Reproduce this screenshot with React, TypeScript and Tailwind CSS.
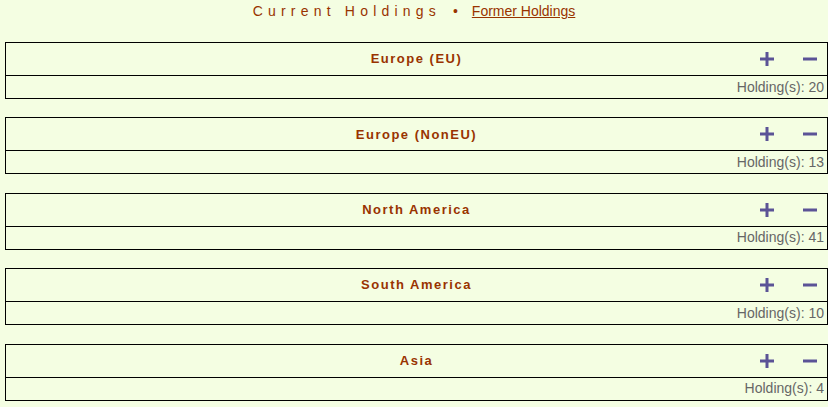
const regions = [
  { name: 'Europe (EU)', count: 20 },
  { name: 'Europe (NonEU)', count: 13 },
  { name: 'North America', count: 41 },
  { name: 'South America', count: 10 },
  { name: 'Asia', count: 4 },
];

const PlusIcon = () => (
  <svg width="14" height="14" viewBox="0 0 14 14" className="block">
    <rect x="0" y="5.5" width="14" height="3" fill="#5b5396" />
    <rect x="5.5" y="0" width="3" height="14" fill="#5b5396" />
  </svg>
);

const MinusIcon = () => (
  <svg width="14" height="14" viewBox="0 0 14 14" className="block">
    <rect x="0" y="5.5" width="14" height="3" fill="#5b5396" />
  </svg>
);

function RegionBox({ name, count }: { name: string; count: number }) {
  return (
    <div className="ml-[5px] border border-black mb-[18.4px]">
      <div className="relative h-[33px] flex items-center justify-center border-b border-black">
        <span className="text-[13px] font-bold tracking-[1.5px] text-[#993300]">{name}</span>
        <div className="absolute right-[10px] top-0 h-full flex items-center gap-[29px]">
          <button className="p-0 cursor-pointer"><PlusIcon /></button>
          <button className="p-0 cursor-pointer"><MinusIcon /></button>
        </div>
      </div>
      <div className="h-[22px] flex items-center justify-end pr-[3px] text-[14px] text-[#666666]">
        Holding(s): {count}
      </div>
    </div>
  );
}

export default function App() {
  return (
    <div
      className="w-[828px] h-[407px] bg-[#f4fee2] overflow-hidden"
      style={{ fontFamily: '"Liberation Sans", Arial, sans-serif' }}
    >
      <div className="h-[42px] flex items-start justify-center pt-[1px] text-[14px] text-[#993300]">
        <span className="tracking-[5.2px]">Current Holdings</span>
        <span className="ml-[12px] mr-[14px]">•</span>
        <a href="#" className="underline text-[#993300]">Former Holdings</a>
      </div>
      {regions.map(r => (
        <RegionBox key={r.name} name={r.name} count={r.count} />
      ))}
    </div>
  );
}
